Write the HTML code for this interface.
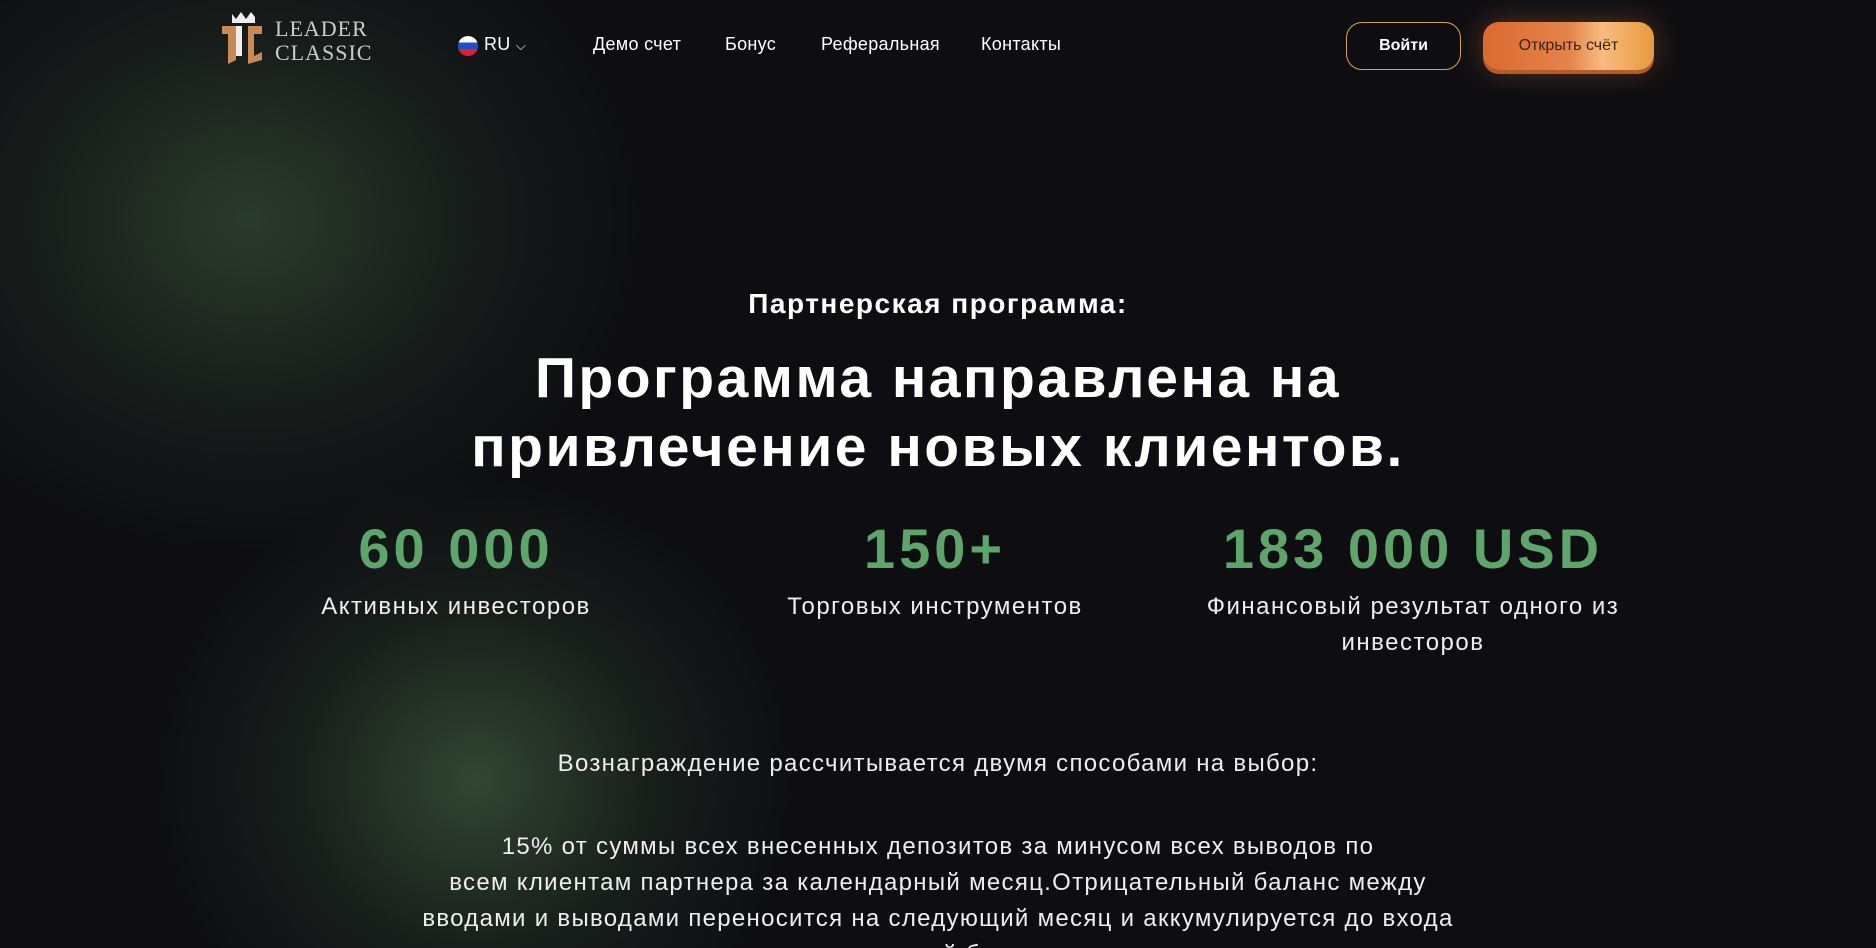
<!DOCTYPE html>
<html><head><meta charset="utf-8"><style>
*{margin:0;padding:0;box-sizing:border-box}
html,body{width:1876px;height:948px;overflow:hidden}
body{background:#0e0e12;font-family:"Liberation Sans","DejaVu Sans",sans-serif;color:#fff;position:relative}
.glow{position:absolute;border-radius:50%;pointer-events:none}
.abs{position:absolute}
.nav{font-size:18px;top:34px;color:#fff;letter-spacing:0.3px}
.c{position:absolute;left:0;width:1876px;text-align:center}
.num{position:absolute;font-size:56px;font-weight:bold;color:#5da56b;text-align:center;width:560px;letter-spacing:4px}
.lab{position:absolute;font-size:24px;text-align:center;width:560px;line-height:36px;color:#eee;letter-spacing:1.5px}
</style></head><body>
<div class="glow" style="left:-150px;top:-120px;width:800px;height:680px;background:radial-gradient(ellipse at center,rgba(55,78,55,0.7) 0%,rgba(38,52,40,0.35) 40%,rgba(14,14,18,0) 70%)"></div>
<div class="glow" style="left:150px;top:470px;width:650px;height:620px;background:radial-gradient(ellipse at center,rgba(62,88,62,0.75) 0%,rgba(40,58,42,0.35) 40%,rgba(14,14,18,0) 70%)"></div>

<svg class="abs" style="left:220px;top:4px" width="46" height="60" viewBox="0 0 46 60">
<path d="M12 10l4 5 5-7 5 7 5-7 4 5v6H12z" fill="#eee"/>
<path d="M2 22h14v34l-8 4V30H2z" fill="#c98a55"/>
<path d="M20 22h22v8h-8v22l8-4v8l-14 4V22z" fill="#c98a55"/>
<path d="M16 22h6v30h-6z" fill="#eee"/>
</svg>
<div class="abs" style="left:275px;top:17px;font-family:'Liberation Serif',serif;font-size:22px;line-height:24px;color:#ccc;letter-spacing:1px">LEADER<br>CLASSIC</div>

<div class="abs" style="left:458px;top:36px;width:20px;height:20px;border-radius:50%;background:linear-gradient(#fff 0 33%,#1c4fd0 33% 66%,#e0202a 66%)"></div>
<div class="abs nav" style="left:484px">RU <span style="font-size:13px">⌵</span></div>
<div class="abs nav" style="left:593px">Демо счет</div>
<div class="abs nav" style="left:725px">Бонус</div>
<div class="abs nav" style="left:821px">Реферальная</div>
<div class="abs nav" style="left:981px">Контакты</div>

<div class="abs" style="left:1346px;top:22px;width:115px;height:48px;border:1px solid #d9a24a;border-radius:16px;font-size:16px;font-weight:bold;text-align:center;line-height:46px">Войти</div>
<div class="abs" style="left:1483px;top:22px;width:171px;height:48px;border-radius:16px;background:linear-gradient(90deg,#db6a30,#e4834a 50%,#f8bb80 70%,#e79a3f);box-shadow:0 4px 0 #b85a28,0 0 30px rgba(230,130,60,0.35);color:#3a2418;font-size:16px;text-align:center;line-height:48px">Открыть счёт</div>

<div class="c" style="top:288px;font-size:28px;font-weight:bold;letter-spacing:1.5px">Партнерская программа:</div>
<div class="c" style="top:344px;font-size:57px;font-weight:bold;line-height:69px;letter-spacing:2.5px">Программа направлена на<br>привлечение новых клиентов.</div>

<div class="num" style="left:176px;top:516px">60 000</div>
<div class="num" style="left:655px;top:516px">150+</div>
<div class="num" style="left:1133px;top:516px">183 000 USD</div>
<div class="lab" style="left:176px;top:589px">Активных инвесторов</div>
<div class="lab" style="left:655px;top:589px">Торговых инструментов</div>
<div class="lab" style="left:1133px;top:589px">Финансовый результат одного из<br>инвесторов</div>

<div class="c" style="top:750px;font-size:24px;color:#eee;letter-spacing:1.3px">Вознаграждение рассчитывается двумя способами на выбор:</div>
<div class="c" style="top:829px;font-size:24px;line-height:36px;color:#eee;letter-spacing:1.3px">15% от суммы всех внесенных депозитов за минусом всех выводов по<br>всем клиентам партнера за календарный месяц.Отрицательный баланс между<br>вводами и выводами переносится на следующий месяц и аккумулируется до входа<br>в плюсовой баланс.</div>
</body></html>
